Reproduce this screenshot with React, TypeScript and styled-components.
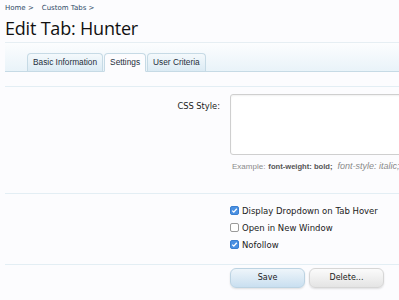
import React from "react";
import styled, { createGlobalStyle } from "styled-components";

const Global = createGlobalStyle`
  html, body {
    margin: 0;
    padding: 0;
    background: #fcfcfe;
    overflow: hidden;
  }
  body {
    font-family: "DejaVu Sans", Verdana, sans-serif;
    color: #222;
  }
`;

const Page = styled.div`
  width: 399px;
  height: 300px;
  overflow: hidden;
  padding: 0 0 0 5px;
  box-sizing: border-box;
`;

const Crumbs = styled.div`
  display: flex;
  gap: 8px;
  padding-top: 3px;
  font-size: 7px;
  color: #2f4a66;
  height: 11px;
  line-height: 11px;
`;

const Title = styled.h1`
  margin: 2px 0 0;
  font-family: "Open Sans", sans-serif;
  font-weight: 400;
  font-size: 18px;
  line-height: 24px;
  color: #111;
  letter-spacing: -0.2px;
  padding-bottom: 2px;
  border-bottom: 1px solid #e6eef3;
`;

const TabBar = styled.div`
  height: 28px;
  display: flex;
  align-items: flex-end;
  padding-left: 22px;
  background: linear-gradient(to bottom, #fcfdfe, #e9f3f9);
  border-bottom: 1px solid #c6dae5;
`;

const Tab = styled.div<{ $active?: boolean }>`
  height: 17px;
  line-height: 17px;
  padding: 0 5px;
  margin-right: 1px;
  font-family: "Liberation Sans", Arial, sans-serif;
  font-size: 8.3px;
  color: #1e2e3c;
  border: 1px solid #c6dae5;
  border-bottom: ${(p) => (p.$active ? "1px solid #fcfcfe" : "none")};
  margin-bottom: ${(p) => (p.$active ? "-1px" : "0")};
  border-radius: 4px 4px 0 0;
  background: ${(p) =>
    p.$active ? "#fcfcfe" : "linear-gradient(to bottom, #f4f9fc, #dcebf4)"};
`;

const Section = styled.div`
  border-top: 1px solid #e3eef4;
  margin-top: 14px;
`;

const Row = styled.div`
  display: grid;
  grid-template-columns: 215px 1fr;
  column-gap: 10px;
`;

const Label = styled.div`
  text-align: right;
  font-size: 8.3px;
  color: #222;
  padding-top: 7px;
`;

const Field = styled.div`
  display: flex;
  flex-direction: column;
`;

const TextArea = styled.div`
  width: 190px;
  height: 59px;
  border: 1px solid #cfcfcf;
  border-radius: 3px;
  background: #fff;
  box-shadow: inset 0 1px 2px rgba(0, 0, 0, 0.06);
`;

const Hint = styled.div`
  margin-top: 6px;
  padding-left: 2px;
  font-family: "Liberation Sans", Arial, sans-serif;
  font-size: 8px;
  color: #8a8a8a;
  white-space: nowrap;
  b {
    color: #555;
    font-size: 7.6px;
    margin-left: 3px;
  }
  i {
    color: #8a8a8a;
    font-size: 9px;
    margin-left: 5px;
  }
`;

const Divider = styled.div`
  border-top: 1px solid #e3eef4;
`;

const Checks = styled.div`
  display: flex;
  flex-direction: column;
  gap: 4px;
  padding: 10px 0 13px;
`;

const CheckRow = styled.label`
  display: flex;
  align-items: center;
  gap: 3px;
  font-size: 8.5px;
  color: #222;
  height: 13px;
`;

const Box = styled.span<{ $on?: boolean }>`
  width: 9px;
  height: 9px;
  border-radius: 2px;
  box-sizing: border-box;
  border: 1px solid ${(p) => (p.$on ? "#3a7fd0" : "#9a9a9a")};
  background: ${(p) => (p.$on ? "#4a90e2" : "#fff")};
  display: flex;
  align-items: center;
  justify-content: center;
`;

const Buttons = styled.div`
  display: flex;
  gap: 4px;
  padding-top: 3px;
`;

const Button = styled.div<{ $primary?: boolean }>`
  width: 73px;
  height: 18px;
  line-height: 18px;
  text-align: center;
  font-size: 8px;
  color: #1a1a1a;
  border-radius: 6px;
  border: 1px solid ${(p) => (p.$primary ? "#bcd3e2" : "#d6d6d6")};
  background: ${(p) =>
    p.$primary
      ? "linear-gradient(to bottom, #eef5fa, #c9dff0)"
      : "linear-gradient(to bottom, #fbfbfb, #e4e4e4)"};
  box-shadow: 0 1px 2px rgba(0, 0, 0, 0.12);
`;

const Tick = () => (
  <svg width="7" height="7" viewBox="0 0 7 7">
    <path d="M1.2 3.6 L2.8 5.1 L5.8 1.8" fill="none" stroke="#fff" strokeWidth="1.3" />
  </svg>
);

const Check = ({ on, label }: { on?: boolean; label: string }) => (
  <CheckRow>
    <Box $on={on}>{on && <Tick />}</Box>
    {label}
  </CheckRow>
);

export default function App() {
  return (
    <Page>
      <Global />
      <Crumbs>
        <span>Home &gt;</span>
        <span>Custom Tabs &gt;</span>
      </Crumbs>
      <Title>Edit Tab: Hunter</Title>
      <TabBar>
        <Tab>Basic Information</Tab>
        <Tab $active>Settings</Tab>
        <Tab>User Criteria</Tab>
      </TabBar>
      <Section>
        <Row style={{ paddingTop: 7, paddingBottom: 22 }}>
          <Label>CSS Style:</Label>
          <Field>
            <TextArea />
            <Hint>
              Example:<b>font-weight: bold;</b><i>font-style: italic;</i>
            </Hint>
          </Field>
        </Row>
      </Section>
      <Divider />
      <Row>
        <div />
        <Checks>
          <Check on label="Display Dropdown on Tab Hover" />
          <Check label="Open in New Window" />
          <Check on label="Nofollow" />
        </Checks>
      </Row>
      <Divider />
      <Row>
        <div />
        <Buttons>
          <Button $primary>Save</Button>
          <Button>Delete...</Button>
        </Buttons>
      </Row>
    </Page>
  );
}
